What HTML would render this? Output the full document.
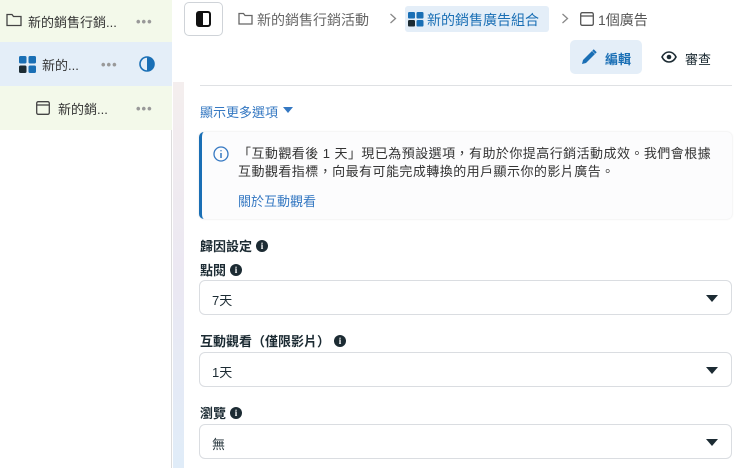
<!DOCTYPE html>
<html><head><meta charset="utf-8"><style>
*{box-sizing:border-box;margin:0;padding:0}
body{width:740px;height:468px;overflow:hidden;background:#fff;font-family:"Liberation Sans","Noto Sans CJK TC",sans-serif;position:relative;color:#1c2b33}
.a{position:absolute}
.side{left:0;top:0;width:172px;height:468px;background:#fff;border-right:1px solid #dcdcdc}
.row{position:absolute;left:0;width:172px;display:flex;align-items:center;font-size:13px;color:#333}
.dots{position:absolute;color:#999;font-size:13px;letter-spacing:1px;font-weight:bold}
.strip{left:173px;top:82px;width:11px;height:386px;background:linear-gradient(#f4eeee,#ebe8f2 50%,#e0ecf8)}
.txt{font-size:13px;white-space:nowrap}
.sel{left:199px;width:533px;height:35px;border:1px solid #dadde1;border-radius:6px;background:#fff;font-size:13px;padding:9px 0 0 12px}
.sel:after{content:"";position:absolute;right:13px;top:14px;border-left:6px solid transparent;border-right:6px solid transparent;border-top:7px solid #1c2b33}
.lbl{font-size:13px;font-weight:bold;left:200px;display:flex;align-items:center;gap:4px}
.i{display:inline-block;width:12px;height:12px;border-radius:50%;background:#1c2b33;color:#fff;font-size:9px;font-weight:bold;text-align:center;line-height:12px;font-family:"Liberation Serif",serif}
</style></head><body>
<div class="a side"></div>
<div class="row" style="top:0;height:42px;background:#f3f9ea">
 <svg class="a" style="left:6px;top:13px" width="16" height="14" viewBox="0 0 16 14"><path d="M1 1.5h5l1.5 2H15v9H1z" fill="none" stroke="#444" stroke-width="1.3"/></svg>
 <span class="a txt" style="left:28px">新的銷售行銷...</span><span class="dots" style="left:136px">•••</span></div>
<div class="row" style="top:42px;height:44px;background:#e4eef8">
 <svg class="a" style="left:19px;top:14px" width="17" height="17" viewBox="0 0 17 17"><rect x="0" y="0" width="7.5" height="7.5" rx="1.5" fill="#1a6fb5"/><rect x="9.5" y="0" width="7.5" height="7.5" rx="1.5" fill="#1a6fb5"/><rect x="0" y="9.5" width="7.5" height="7.5" rx="1.5" fill="#1c2b33"/><rect x="9.5" y="9.5" width="7.5" height="7.5" rx="1.5" fill="#1a6fb5"/></svg>
 <span class="a txt" style="left:42px">新的...</span><span class="dots" style="left:101px">•••</span>
 <svg class="a" style="left:139px;top:14px" width="16" height="16" viewBox="0 0 16 16"><circle cx="8" cy="8" r="7" fill="none" stroke="#1a6fb5" stroke-width="1.6"/><path d="M8 1a7 7 0 0 1 0 14z" fill="#1a6fb5"/></svg></div>
<div class="row" style="top:86px;height:44px;background:#f3f9ea">
 <svg class="a" style="left:36px;top:15px" width="14" height="14" viewBox="0 0 14 14"><rect x="0.7" y="0.7" width="12.6" height="12.6" rx="1.5" fill="none" stroke="#444" stroke-width="1.3"/><path d="M1 4h12" stroke="#444" stroke-width="1.3"/></svg>
 <span class="a txt" style="left:58px">新的銷...</span><span class="dots" style="left:136px">•••</span></div>
<div class="a strip"></div>
<div class="a" style="left:184px;top:2px;width:39px;height:34px;border:1px solid #cfd3d8;border-radius:5px;background:#fff"></div>
<svg class="a" style="left:196px;top:11px" width="15" height="16" viewBox="0 0 15 16"><rect x="1" y="1" width="13" height="14" rx="2" fill="none" stroke="#111" stroke-width="2"/><rect x="1" y="1" width="6" height="14" rx="1" fill="#111"/></svg>
<svg class="a" style="left:238px;top:12px" width="15" height="13" viewBox="0 0 15 13"><path d="M1 1.5h4.5l1.5 2H14v8.5H1z" fill="none" stroke="#666" stroke-width="1.3"/></svg>
<span class="a txt" style="left:257px;top:10px;font-size:14px;color:#666">新的銷售行銷活動</span>
<svg class="a" style="left:389px;top:13px" width="8" height="11" viewBox="0 0 8 11"><path d="M1.5 1l5 4.5-5 4.5" fill="none" stroke="#888" stroke-width="1.3"/></svg>
<div class="a" style="left:405px;top:6px;width:144px;height:26px;background:#e4eef8;border-radius:3px"></div>
<svg class="a" style="left:408px;top:12px" width="16" height="15" viewBox="0 0 16 15"><rect x="0" y="0" width="7" height="6.5" rx="1.3" fill="#1a6fb5"/><rect x="8.5" y="0" width="7" height="6.5" rx="1.3" fill="#1a6fb5"/><rect x="0" y="8" width="7" height="6.5" rx="1.3" fill="#1c2b33"/><rect x="8.5" y="8" width="7" height="6.5" rx="1.3" fill="#1a6fb5"/></svg>
<span class="a txt" style="left:427px;top:10px;font-size:14px;color:#1a6fb5">新的銷售廣告組合</span>
<svg class="a" style="left:561px;top:13px" width="8" height="11" viewBox="0 0 8 11"><path d="M1.5 1l5 4.5-5 4.5" fill="none" stroke="#888" stroke-width="1.3"/></svg>
<svg class="a" style="left:580px;top:12px" width="14" height="14" viewBox="0 0 14 14"><rect x="0.7" y="0.7" width="12.6" height="12.6" rx="1.5" fill="none" stroke="#555" stroke-width="1.3"/><path d="M1 4h12" stroke="#555" stroke-width="1.3"/></svg>
<span class="a txt" style="left:598px;top:10px;font-size:14px;color:#555">1個廣告</span>
<div class="a" style="left:570px;top:40px;width:72px;height:34px;background:#e4eef8;border-radius:5px"></div>
<svg class="a" style="left:581px;top:49px" width="16" height="16" viewBox="0 0 16 16"><path d="M1 15l1-4L11 2l3 3-9 9z" fill="#1a6fb5"/><path d="M12 1l3 3" stroke="#1a6fb5" stroke-width="2"/></svg>
<span class="a txt" style="left:605px;top:49px;font-weight:bold;color:#1a6fb5">編輯</span>
<svg class="a" style="left:661px;top:51px" width="16" height="12" viewBox="0 0 16 12"><path d="M1 6C3 2 6 1 8 1s5 1 7 5c-2 4-5 5-7 5S3 10 1 6z" fill="none" stroke="#1c2b33" stroke-width="1.6"/><circle cx="8" cy="6" r="2.3" fill="#1c2b33"/></svg>
<span class="a txt" style="left:685px;top:49px;color:#1c2b33">審查</span>
<div class="a" style="left:200px;top:85px;width:532px;height:1px;background:#dfe1e4"></div>
<span class="a txt" style="left:200px;top:102px;color:#3578c2">顯示更多選項</span>
<div class="a" style="left:283px;top:107px;border-left:5px solid transparent;border-right:5px solid transparent;border-top:6px solid #3578c2"></div>
<div class="a" style="left:199px;top:132px;width:533px;height:87px;background:#fcfcfd;border-radius:5px;border-left:3px solid #1a6fb5;box-shadow:0 0 2px rgba(0,0,0,.12)"></div>
<svg class="a" style="left:213px;top:146px" width="16" height="16" viewBox="0 0 16 16"><circle cx="8" cy="8" r="7" fill="none" stroke="#3578c2" stroke-width="1.3"/><path d="M8 7v5M8 4.3v1" stroke="#3578c2" stroke-width="1.5"/></svg>
<div class="a" style="left:238px;top:145px;font-size:13px;line-height:18px;color:#333;width:482px;letter-spacing:0.45px">「互動觀看後 1 天」現已為預設選項，有助於你提高行銷活動成效。我們會根據互動觀看指標，向最有可能完成轉換的用戶顯示你的影片廣告。</div>
<span class="a txt" style="left:238px;top:191px;color:#3578c2">關於互動觀看</span>
<div class="a lbl" style="top:236px">歸因設定 <span class="i">i</span></div>
<div class="a lbl" style="top:260px">點閱 <span class="i">i</span></div>
<div class="a sel" style="top:280px">7天</div>
<div class="a lbl" style="top:331px">互動觀看（僅限影片） <span class="i">i</span></div>
<div class="a sel" style="top:352px">1天</div>
<div class="a lbl" style="top:403px">瀏覽 <span class="i">i</span></div>
<div class="a sel" style="top:424px">無</div>
</body></html>
